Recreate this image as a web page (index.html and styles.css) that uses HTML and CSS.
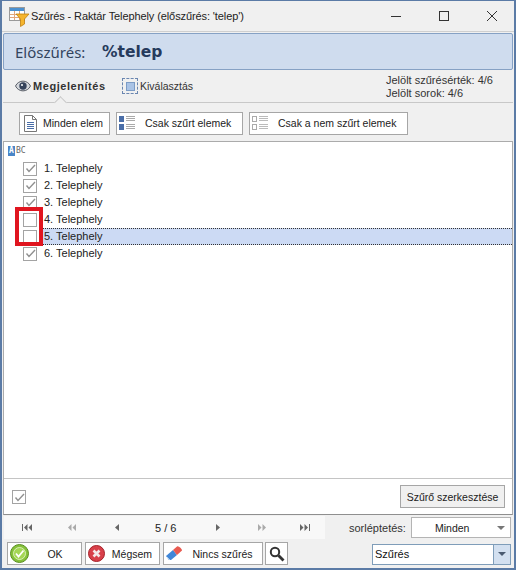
FILE: index.html
```html
<!DOCTYPE html>
<html lang="hu">
<head>
<meta charset="utf-8">
<title>Szűrés</title>
<link rel="stylesheet" href="styles.css">
</head>
<body>
<div class="window">
  <header class="titlebar">
    <svg class="app-icon" width="21" height="20" viewBox="0 0 21 20">
      <rect x="0.5" y="0.5" width="15" height="13" fill="#fff" stroke="#9a9a9a"/>
      <rect x="1" y="1" width="14" height="3" fill="#4a90d0"/>
      <path d="M1 7.500h14M1 10.500h14M5.500 4v9M10.500 4v9" stroke="#e3a67c" fill="none"/>
      <path d="M7 7h13l-4.500 5v5l-4 2.500v-7.500z" fill="#f5b52e" stroke="#c08010" stroke-width="0.8"/>
    </svg>
    <span class="title">Szűrés - Raktár Telephely (előszűrés: 'telep')</span>
    <div class="winctl">
      <svg width="12" height="12" viewBox="0 0 12 12"><path d="M1 6.500h10" stroke="#333" fill="none"/></svg>
      <svg width="12" height="12" viewBox="0 0 12 12"><rect x="1.500" y="1.500" width="9" height="9" stroke="#333" fill="none"/></svg>
      <svg width="12" height="12" viewBox="0 0 12 12"><path d="M1 1l10 10M11 1L1 11" stroke="#333" fill="none"/></svg>
    </div>
  </header>
  <section class="prefilter">
    <span class="pf-label">Előszűrés:</span>
    <span class="pf-value">%telep</span>
  </section>
  <section class="tabs">
    <div class="tab tab-active">
      <svg width="16" height="12" viewBox="0 0 16 12"><path d="M.5 6c3-6.500 12-6.500 15 0-3 6.500-12 6.500-15 0z" fill="#d4d7dc" stroke="#5a5f68"/><circle cx="8" cy="6" r="3.700" fill="#36445c"/><circle cx="7" cy="5" r="1" fill="#fff"/></svg>
      <span>Megjelenítés</span>
    </div>
    <div class="tab tab-plain">
      <span class="sel-icon"><span class="sel-inner"></span></span>
      <span>Kiválasztás</span>
    </div>
    <div class="stats">
      <div>Jelölt szűrésérték: 4/6</div>
      <div>Jelölt sorok: 4/6</div>
    </div>
    <span class="notch"></span>
  </section>
  <section class="toolbar">
    <button class="btn btn-all">
      <svg width="13" height="17" viewBox="0 0 13 17"><path d="M.5.5h8l4 4v12H.5z" fill="#fff" stroke="#777"/><path d="M8.500.5v4h4" fill="none" stroke="#777"/><path d="M3 7.500h7M3 9.500h7M3 11.500h7M3 13.500h7" stroke="#4a6ea8"/></svg>
      <span>Minden elem</span>
    </button>
    <button class="btn btn-only">
      <svg width="16" height="14" viewBox="0 0 16 14"><rect width="5" height="6" fill="#4a6ea8"/><rect y="8" width="5" height="6" fill="#4a6ea8"/><path d="M7 .5h9M7 2.500h9M7 4.500h9M7 8.500h9M7 10.500h9M7 12.500h9" stroke="#aaa"/></svg>
      <span>Csak szűrt elemek</span>
    </button>
    <button class="btn btn-not">
      <svg width="16" height="14" viewBox="0 0 16 14"><rect x=".5" y=".5" width="4" height="5" fill="#fff" stroke="#aaa"/><rect x=".5" y="8.500" width="4" height="5" fill="#fff" stroke="#aaa"/><path d="M7 .5h9M7 2.500h9M7 4.500h9M7 8.500h9M7 10.500h9M7 12.500h9" stroke="#bbb"/></svg>
      <span>Csak a nem szűrt elemek</span>
    </button>
  </section>
  <main class="list-panel">
    <div class="list-head">
      <span class="abc"><span class="abc-a">A</span><span class="abc-bc">BC</span></span>
    </div>
    <ul class="rows">
      <li class="row"><span class="check"><svg width="11" height="9" viewBox="0 0 11 9"><path d="M1.500 4.500l2.500 3 6-6.500" stroke="#909090" stroke-width="1.400" fill="none"/></svg></span><span class="row-text">1. Telephely</span></li>
      <li class="row"><span class="check"><svg width="11" height="9" viewBox="0 0 11 9"><path d="M1.500 4.500l2.500 3 6-6.500" stroke="#909090" stroke-width="1.400" fill="none"/></svg></span><span class="row-text">2. Telephely</span></li>
      <li class="row"><span class="check"><svg width="11" height="9" viewBox="0 0 11 9"><path d="M1.500 4.500l2.500 3 6-6.500" stroke="#909090" stroke-width="1.400" fill="none"/></svg></span><span class="row-text">3. Telephely</span></li>
      <li class="row"><span class="check"></span><span class="row-text">4. Telephely</span></li>
      <li class="row"><span class="check"></span><span class="row-text row-current">5. Telephely</span></li>
      <li class="row"><span class="check"><svg width="11" height="9" viewBox="0 0 11 9"><path d="M1.500 4.500l2.500 3 6-6.500" stroke="#909090" stroke-width="1.400" fill="none"/></svg></span><span class="row-text">6. Telephely</span></li>
    </ul>
    <span class="highlight"></span>
    <div class="list-foot">
      <span class="check check-foot"><svg width="11" height="9" viewBox="0 0 11 9"><path d="M1.500 4.500l2.500 3 6-6.500" stroke="#909090" stroke-width="1.400" fill="none"/></svg></span>
      <button class="btn-edit">Szűrő szerkesztése</button>
    </div>
  </main>
  <nav class="navbar">
    <div class="pager">
      <svg class="nav-ico" width="10" height="7" viewBox="0 0 10 7"><path d="M0 0h1v7H0zM5.500 0v7L2 3.500zM10 0v7L6.500 3.500z" fill="#666"/></svg>
      <svg class="nav-ico" width="8" height="7" viewBox="0 0 8 7"><path d="M3.500 0v7L0 3.500zM8 0v7L4.500 3.500z" fill="#aaa"/></svg>
      <svg class="nav-ico" width="4" height="7" viewBox="0 0 4 7"><path d="M4 0v7L0 3.500z" fill="#666"/></svg>
      <span class="pos">5 / 6</span>
      <svg class="nav-ico" width="4" height="7" viewBox="0 0 4 7"><path d="M0 0v7l4-3.500z" fill="#666"/></svg>
      <svg class="nav-ico" width="8" height="7" viewBox="0 0 8 7"><path d="M0 0v7l3.500-3.500zM4.500 0v7L8 3.500z" fill="#aaa"/></svg>
      <svg class="nav-ico" width="10" height="7" viewBox="0 0 10 7"><path d="M0 0v7l3.500-3.500zM4.500 0v7L8 3.500zM9 0h1v7H9z" fill="#666"/></svg>
    </div>
    <span class="step-label">sorléptetés:</span>
    <div class="combo-plain"><span>Minden</span><span class="arrow arrow-plain"></span></div>
  </nav>
  <footer class="actions">
    <button class="btn act act-ok">
      <svg width="19" height="19" viewBox="0 0 19 19"><circle cx="9.500" cy="9.500" r="9" fill="#86c23a" stroke="#5a8f20"/><circle cx="9.500" cy="9.500" r="6" fill="#a4d655" stroke="#e8f6d0" stroke-width=".8"/><path d="M6 9.500l2.500 3 5-6" stroke="#fff" stroke-width="1.800" fill="none"/></svg>
      <span class="act-text">OK</span>
    </button>
    <button class="btn act act-cancel">
      <svg width="17" height="17" viewBox="0 0 17 17"><circle cx="8.500" cy="8.500" r="8" fill="#d8404a" stroke="#a52028"/><path d="M5.500 5.500l6 6M11.500 5.500l-6 6" stroke="#f4e8e8" stroke-width="2.600" fill="none"/></svg>
      <span class="act-text">Mégsem</span>
    </button>
    <button class="btn act act-clear">
      <svg width="17" height="15" viewBox="0 0 17 15"><path d="M0 10l7-6 4 5-6 5H3z" fill="#3f86d8"/><path d="M7 4l4-3.500c1.500-1 5 2.500 5 4L11 9z" fill="#e85a50"/><path d="M1 11l3 3" stroke="#a9ccf0" fill="none"/></svg>
      <span class="act-text">Nincs szűrés</span>
    </button>
    <button class="btn act-search">
      <svg width="16" height="16" viewBox="0 0 16 16"><circle cx="6" cy="6" r="4.200" fill="#fff" stroke="#333" stroke-width="2"/><path d="M9.500 9.500l5 5" stroke="#333" stroke-width="2.800"/></svg>
    </button>
    <div class="combo-blue"><span class="combo-text">Szűrés</span><span class="combo-drop"><span class="arrow arrow-blue"></span></span></div>
  </footer>
</div>
</body>
</html>
```
FILE: styles.css
```css
* { box-sizing: border-box; }
html, body { margin: 0; padding: 0; }
body { font-family: "Liberation Sans", sans-serif; font-size: 11px; color: #222; }
ul { list-style: none; margin: 0; padding: 0; }
button { font: inherit; color: inherit; margin: 0; cursor: default; }

.window {
  width: 516px; height: 570px;
  display: flex; flex-direction: column;
  background: #f0f0f0;
  border: 2px solid #5b7ba6;
  border-top-width: 1px;
  padding: 0 1px 1px;
}

.titlebar { height: 31px; display: flex; align-items: center; padding-left: 7px; flex: none; border-bottom: 1px solid #cfcfcf; margin: 0 -1px; }
.app-icon { flex: none; margin-right: 1px; margin-top: 1px; }
.title { font-size: 11px; letter-spacing: -0.1px; color: #222; }
.winctl { margin-left: auto; display: flex; gap: 36px; padding-right: 16px; }

.prefilter {
  height: 37px; margin-top: 1px; flex: none;
  background: #cfdcee; border: 1px solid #86a1c4; border-radius: 2px;
  display: flex; align-items: center; padding-left: 11px;
}
.pf-label { font-family: "Noto Sans", sans-serif; font-size: 15px; color: #33445e; width: 87px; }
.pf-value { font-family: "DejaVu Sans", sans-serif; font-weight: bold; font-size: 15.500px; color: #263a5c; }

.tabs {
  height: 33px; flex: none; position: relative;
  display: flex; align-items: center;
  border-bottom: 1px solid #c8c8c8;
  padding-left: 12px;
}
.tab { display: flex; align-items: center; gap: 2px; font-size: 11px; color: #333; }
.tab-active { font-weight: bold; width: 107px; letter-spacing: 0.55px; }
.tab-plain { font-size: 10.500px; }
.sel-icon { width: 16px; height: 16px; border: 1px dashed #6a86b0; display: flex; align-items: center; justify-content: center; }
.sel-inner { width: 9px; height: 9px; background: #a9c3e6; border: 1px solid #7c9cc6; }
.stats { margin-left: auto; margin-right: 18px; width: 109px; font-size: 11px; line-height: 13px; color: #333; padding-top: 1px; white-space: nowrap; }
.notch {
  position: absolute; left: 53px; bottom: -5px; width: 9px; height: 9px;
  background: #f0f0f0; border-left: 1px solid #c8c8c8; border-top: 1px solid #c8c8c8;
  transform: rotate(45deg);
}

.toolbar { height: 38px; flex: none; display: flex; align-items: center; gap: 6px; padding: 2px 0 0 16px; }
.btn {
  height: 23px; display: flex; align-items: center; padding: 0;
  background: #fff; border: 1px solid #a6a6a6; border-radius: 0;
  font-size: 10.500px; color: #222; white-space: nowrap;
}
.btn-all { width: 91px; padding-left: 4px; gap: 6px; }
.btn-only { width: 127px; padding-left: 2px; gap: 10px; }
.btn-not { width: 159px; padding-left: 2px; gap: 10px; }

.list-panel {
  flex: 1; min-height: 0; position: relative; background: #fff;
  border: 1px solid #ababab; border-bottom-color: #8f8f8f;
  display: flex; flex-direction: column;
}
.list-head { height: 18px; flex: none; display: flex; align-items: center; padding-left: 4px; }
.abc { display: flex; align-items: center; font-family: "DejaVu Sans Mono", monospace; font-size: 8px; font-weight: bold; line-height: 10px; }
.abc-a { background: #4a86c8; color: #fff; width: 7px; height: 10px; text-align: center; }
.abc-bc { color: #666; margin-left: 1px; font-weight: normal; }

.rows { flex: 1; }
.row { height: 17px; display: flex; align-items: center; padding-left: 19px; gap: 6px; font-size: 11px; color: #222; }
.row-text { flex: 1; height: 17px; line-height: 16px; padding-left: 1px; }
.row-current { background: #ccdaf4; border-top: 1px dotted #333; border-bottom: 1px dotted #333; line-height: 14px; }
.check { width: 14px; height: 14px; flex: none; background: #fff; border: 1px solid #a3a3a3; display: flex; align-items: center; justify-content: center; }
.highlight { position: absolute; left: 11px; top: 65px; width: 28px; height: 39px; border: 4px solid #e0151f; pointer-events: none; }

.list-foot { height: 36px; flex: none; border-top: 1px solid #c4c4c4; display: flex; align-items: center; justify-content: space-between; padding: 0 7px 0 8px; }
.check-foot { margin-top: 1px; }
.btn-edit { width: 105px; height: 23px; padding: 0; background: #f0f0f0; border: 1px solid #a6a6a6; font-size: 10.500px; color: #222; white-space: nowrap; }

.navbar { height: 23px; flex: none; display: flex; align-items: center; margin-top: 1px; }
.pager { width: 321px; margin-left: 1px; height: 23px; background: #f8f8f8; display: flex; align-items: center; padding-left: 18px; }
.nav-ico { flex: none; }
.pager .nav-ico:nth-child(1) { margin-right: 36px; }
.pager .nav-ico:nth-child(2) { margin-right: 39px; }
.pager .nav-ico:nth-child(3) { margin-right: 36px; }
.pos { width: 22px; font-size: 11px; color: #222; margin-right: 39px; white-space: nowrap; }
.pager .nav-ico:nth-child(5) { margin-right: 38px; }
.pager .nav-ico:nth-child(6) { margin-right: 34px; }
.step-label { font-size: 11px; color: #333; margin-left: 24px; width: 62px; white-space: nowrap; }
.combo-plain { width: 100px; height: 21px; background: #fff; border: 1px solid #b4b4b4; display: flex; align-items: center; justify-content: space-between; padding: 0 5px 0 23px; font-size: 10.500px; color: #222; }
.arrow { width: 0; height: 0; border-left: 4px solid transparent; border-right: 4px solid transparent; border-top: 4px solid #777; }
.arrow-plain { flex: none; }

.actions { height: 27px; flex: none; display: flex; align-items: center; gap: 3px; padding: 0 2px 0 4px; margin-top: 1px; }
.act { height: 23px; justify-content: flex-start; padding-left: 2px; }
.act-ok { width: 75px; }
.act-cancel { width: 75px; }
.act-clear { width: 100px; }
.act-text { flex: 1; text-align: center; white-space: nowrap; }
.act-search { width: 23px; height: 23px; padding: 0; background: #fff; border: 1px solid #a6a6a6; display: flex; align-items: center; justify-content: center; margin-left: -1px; }
.combo-blue { margin-left: auto; width: 139px; height: 21px; margin-top: 1px; background: #fff; border: 1px solid #7f9db9; display: flex; align-items: center; font-size: 11px; color: #111; }
.combo-text { flex: 1; padding-left: 2px; }
.combo-drop { width: 17px; height: 100%; background: #d3e0f0; border-left: 1px solid #7f9db9; display: flex; align-items: center; justify-content: center; }
.arrow-blue { border-top-color: #4a5a70; }
```
